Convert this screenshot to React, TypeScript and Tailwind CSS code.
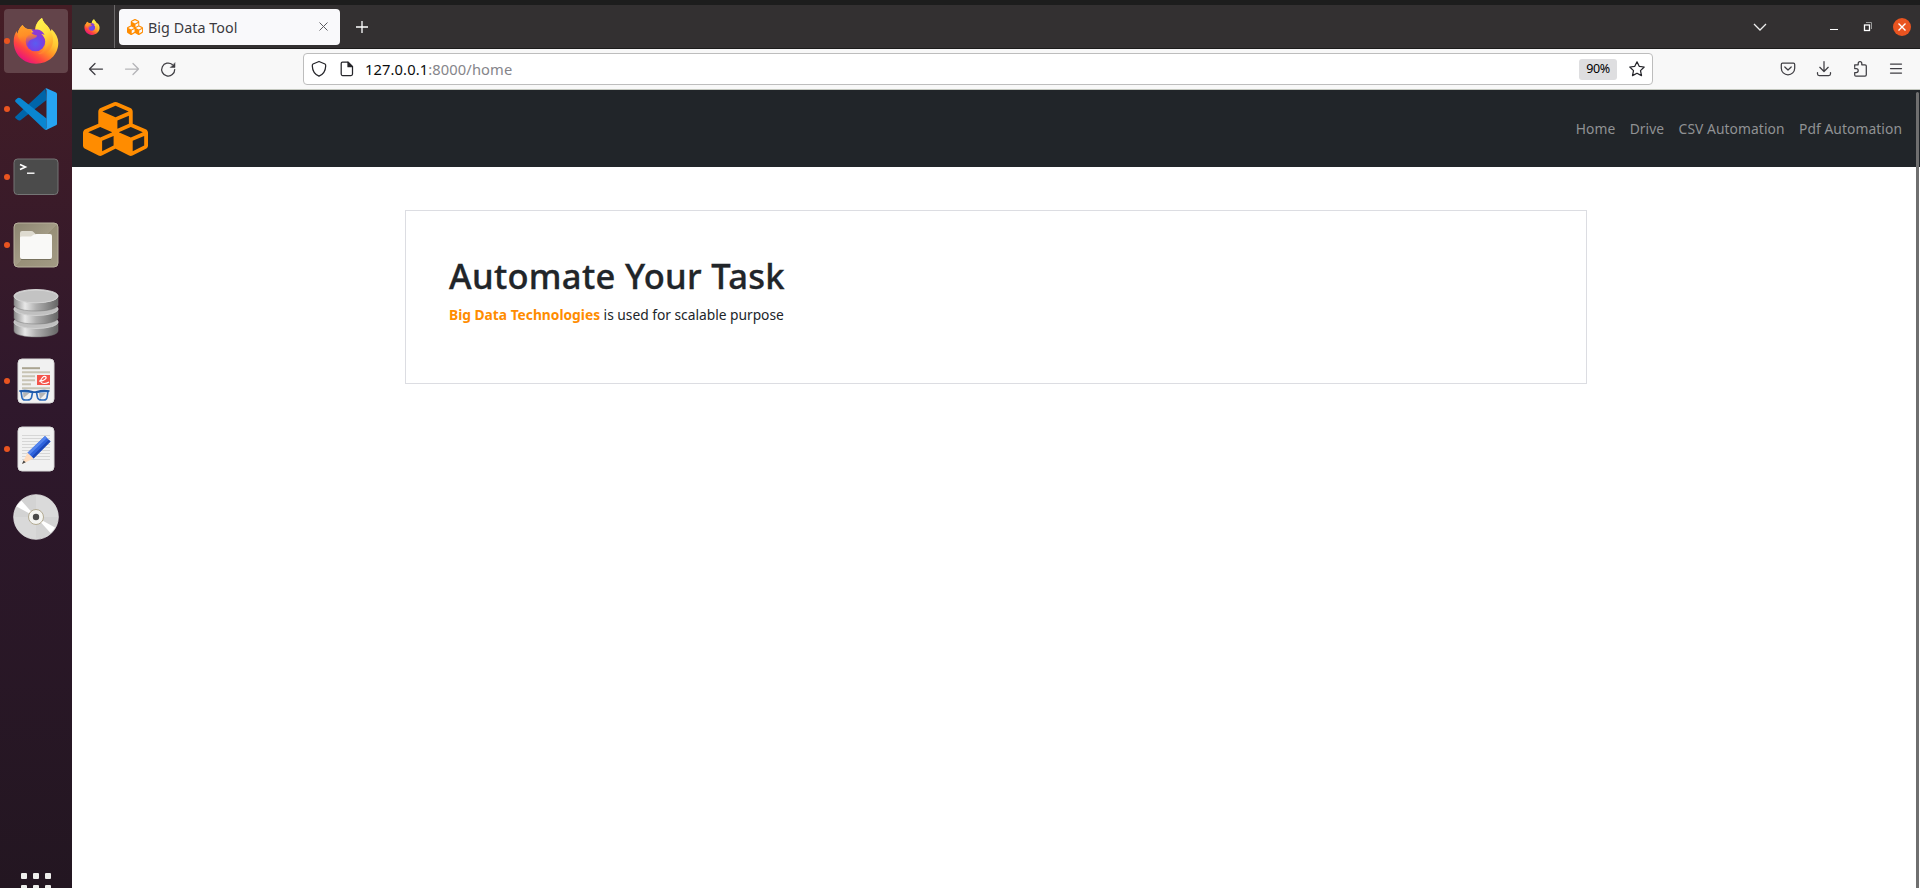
import type { ReactNode } from "react";

const CUBES =
  "M640 1632l384-192v-314l-384 164v342zm-64-454l404-173-404-173-404 173zm1088 454l384-192v-314l-384 164v342zm-64-454l404-173-404-173-404 173zm-448-293l384-165v-266l-384 164v267zm-64-379l441-189-441-189-441 189zm1088 518v416q0 36-19 67t-52 47l-448 224q-25 14-57 14t-57-14l-448-224q-4-2-7-4-2 2-7 4l-448 224q-25 14-57 14t-57-14l-448-224q-33-16-52-47t-19-67v-416q0-38 21.500-70t56.500-48l434-186v-400q0-38 21.500-70t56.500-48l448-192q23-10 50-10t50 10l448 192q35 16 56.500 48t21.500 70v400l434 186q36 16 57 48t21 70z";

function Cubes({ className }: { className: string }) {
  return (
    <svg viewBox="0 0 2176 1792" preserveAspectRatio="none" className={className} fill="#ff8c00">
      <path d={CUBES} />
    </svg>
  );
}

function Firefox({ id, className }: { id: string; className: string }) {
  return (
    <svg viewBox="0 0 46 47" className={className}>
      <defs>
        <linearGradient id={id + "body"} x1="0.85" y1="0.15" x2="0.3" y2="0.97">
          <stop offset="0" stopColor="#ffec4a" />
          <stop offset="0.35" stopColor="#ffc532" />
          <stop offset="0.56" stopColor="#ff8f26" />
          <stop offset="0.78" stopColor="#ff4540" />
          <stop offset="1" stopColor="#ea1579" />
        </linearGradient>
        <linearGradient id={id + "flame"} x1="0.3" y1="0" x2="0.6" y2="1">
          <stop offset="0" stopColor="#fff44f" />
          <stop offset="0.45" stopColor="#ffe040" />
          <stop offset="0.8" stopColor="#ffae2c" />
          <stop offset="1" stopColor="#ff6a33" stopOpacity="0" />
        </linearGradient>
        <linearGradient id={id + "head"} x1="0.2" y1="0" x2="0.4" y2="1">
          <stop offset="0" stopColor="#ffa22a" />
          <stop offset="0.5" stopColor="#ff8f27" />
          <stop offset="1" stopColor="#ff5438" stopOpacity="0.1" />
        </linearGradient>
        <radialGradient id={id + "globe"} cx="0.5" cy="0.6" r="0.6">
          <stop offset="0" stopColor="#5a5df0" />
          <stop offset="0.6" stopColor="#7542e5" />
          <stop offset="1" stopColor="#9a35c8" />
        </radialGradient>
      </defs>
      <path
        d="M9.500 8C11 10.500 13 11.500 14.500 12Q19 12 22 13.500C22 8 25 3.500 29 1C30 4.500 32 6.500 34.500 9C36 11 37 12.800 37.500 14.500C38.200 13.700 38.500 13 38.500 12C43 16 45.300 21 45.300 26C45.300 38 35.500 46.700 23 46.700C10.500 46.700 .7 37.500 .7 24.500C.7 19.500 2 16 4 14C4 15 4.200 16 4.600 16.700C5.500 12.500 7.500 9.800 9.500 8Z"
        fill={`url(#${id}body)`}
      />
      <circle cx="22.500" cy="24.500" r="9.800" fill={`url(#${id}globe)`} />
      <path
        d="M29 1C30 4.500 32 6.500 34.500 9C39 15 41 21 39.500 27C38 34 32 38 25 37C31 35 33.500 30 32.700 25C32 20 29 16.500 24 14C21.500 11 24 4 29 1Z"
        fill={`url(#${id}flame)`}
      />
      <path
        d="M18.500 13C25 11.500 30 13.500 31.500 18C29 16.500 27.500 17 26 18C23.500 18 20.500 15.500 18.500 13Z"
        fill="#8b3bd6"
      />
      <path
        d="M9.500 8C11 10.500 13 11.800 15 12C16.500 12 18 12.500 18.500 13.500C18 15.500 18.500 17.500 24 18.500C24 21 21 21.500 18.500 22.500C15.500 23.700 14.500 26 15.500 29C11 28 5 23 4.600 16.700C5.500 12.500 7.500 9.800 9.500 8Z"
        fill={`url(#${id}head)`}
      />
    </svg>
  );
}

function VsCode() {
  return (
    <svg viewBox="0 0 42 42" className="size-[42px]">
      <path d="M0 29L30.500 .4L31.500 12L5.500 32.300Q3.800 33 2.500 31.800L.6 30.200Q0 29.500 0 29Z" fill="#0065a9" />
      <path d="M.6 11.800L2.800 10Q4 9.200 5.500 10.200L31.500 30.500L31.500 42Q30 42 28.500 40.500L.6 14Q-.3 13 .6 11.800Z" fill="#0a86d1" />
      <path d="M30.500 .4Q31 0 32 .4L41 4.600Q42 5.200 42 6.300V35.700Q42 36.800 41 37.300L32.200 41.600Q31.300 42 30.500 41.600L31.500 40V2Z" fill="#26a4f2" />
    </svg>
  );
}

function Terminal() {
  return (
    <svg viewBox="0 0 46 38" className="h-[38px] w-[46px]">
      <rect x="1" y="1" width="44" height="35.500" rx="3.500" fill="#4b4b4b" stroke="#757575" strokeWidth="1" />
      <path d="M7 6.500L12.500 9L7 11.500" fill="none" stroke="#fff" strokeWidth="1.600" />
      <path d="M14 15.200H21.500" stroke="#fff" strokeWidth="1.400" />
    </svg>
  );
}

function Files() {
  return (
    <svg viewBox="0 0 46 46" className="size-[46px]">
      <defs>
        <linearGradient id="filesTile" x1="0" y1="0" x2="1" y2="1">
          <stop offset="0" stopColor="#8b846f" />
          <stop offset="0.5" stopColor="#a39b85" />
          <stop offset="0.51" stopColor="#989078" />
          <stop offset="1" stopColor="#a29a84" />
        </linearGradient>
      </defs>
      <rect x="1" y="1" width="44" height="44" rx="4" fill="url(#filesTile)" stroke="#b9b29e" />
      <path d="M7 11Q7 9 9 9H18Q20 9 20.500 10L22.500 12V17H7Z" fill="#dedbd0" />
      <path d="M7 15.500Q7 14.500 9 14.500H18L21 12.500Q22 12 23.500 12H37Q39 12 39 14V35Q39 37 37 37H9Q7 37 7 35Z" fill="#f9f9f7" />
      <path d="M8 37.500H38" stroke="#6f6957" strokeWidth="0.8" />
    </svg>
  );
}

function Database() {
  return (
    <svg viewBox="0 0 46 49" className="h-[49px] w-[46px]">
      <defs>
        <linearGradient id="dbSide">
          <stop offset="0" stopColor="#8a8a8a" />
          <stop offset="0.25" stopColor="#e8e8e8" />
          <stop offset="0.5" stopColor="#b0b0b0" />
          <stop offset="1" stopColor="#666" />
        </linearGradient>
      </defs>
      {[33, 20, 7].map((y) => (
        <g key={y}>
          <path
            d={`M1 ${y}V${y + 9}C2 ${y + 17} 44 ${y + 17} 45 ${y + 9}V${y}Z`}
            fill="url(#dbSide)"
            stroke="#777"
            strokeWidth="0.5"
          />
          <ellipse cx="23" cy={y} rx="22" ry="6.500" fill="#c0c0c0" stroke="#d2d2d2" />
        </g>
      ))}
      <ellipse cx="23" cy="7.500" rx="21.500" ry="6.300" fill="#c3c3c3" stroke="#d4d4d4" />
    </svg>
  );
}

function Sheet({ children }: { children: ReactNode }) {
  return (
    <svg viewBox="0 0 38 46" className="h-[46px] w-[38px]">
      <rect x="1" y="1" width="36" height="44" rx="4" fill="#f1f1f1" stroke="#d9d9d9" />
      {children}
    </svg>
  );
}

function DocumentViewer() {
  return (
    <Sheet>
      <path d="M5 10.200H23" stroke="#aaa491" strokeWidth="2" />
      <path d="M5 14.200H33M5 18.200H18M5 22.200H18M5 26.200H14M5 30.200H33" stroke="#c8c3b4" strokeWidth="2" />
      <rect x="20" y="17" width="13" height="10" fill="#f4544a" />
      <path d="M22 23C25 23.500 30 21 29 19C27 17 23 21 24 24C25 26 29 26 32 24" fill="none" stroke="#fff" strokeWidth="1.100" />
      <path d="M6 34.500H13L6.500 40ZM22 35H29L23 41Z" fill="#b5b5b5" />
      <path
        d="M4 33.500Q9.500 33 15.500 34.500L14.500 39.500Q13.800 42 10.500 42H8Q5.500 42 5 39.500ZM19.500 34.500Q25.500 33 31 33.500L30 39.500Q29.500 42 27 42H24.500Q21.200 42 20.500 39.500Z"
        fill="none"
        stroke="#2a69ba"
        strokeWidth="1.600"
      />
      <path d="M2.300 33.200Q9 32 15.500 33.800Q17.500 34.500 19.500 33.800Q26 32 32.500 33.200" fill="none" stroke="#1c57a8" strokeWidth="1.800" />
    </Sheet>
  );
}

function TextEditor() {
  return (
    <Sheet>
      <path
        d="M5 9.500H33M5 12.500H33M5 15.500H33M5 18.500H33M5 21.500H33M5 24.500H33M5 27.500H33M5 30.500H33M5 33.500H33"
        stroke="#d6d6d6"
        strokeWidth="1"
      />
      <path d="M28 10L33.500 15.500L16.500 32.500L10.500 26.800Z" fill="#2f63dd" />
      <path d="M28 10L30 12L12.500 28.700L10.500 26.800Z" fill="#5686ee" />
      <path d="M31.800 13.800L33.500 15.500L16.500 32.500L14.800 30.800Z" fill="#1d48b8" />
      <path d="M10.500 26.800L16.500 32.500L5 38Z" fill="#ffdcbd" />
      <path d="M6.500 34.500L8.800 36.300L5 38Z" fill="#444" />
    </Sheet>
  );
}

function Disc() {
  return (
    <svg viewBox="0 0 46 46" className="size-[46px]">
      <circle cx="23" cy="23" r="22.300" fill="#d3d3d3" stroke="#e6e6e6" strokeWidth="0.8" />
      <path d="M23 23V1A22 22 0 0 1 45 23Z" fill="#dadada" />
      <path d="M23 23V45A22 22 0 0 1 1 23Z" fill="#d9d9d9" />
      <path d="M23 23L3.500 12.500Q5.500 9 8.500 6.800Z" fill="#fff" />
      <path d="M23 23L42 33.500Q40.500 36.500 37.500 39Z" fill="#fff" />
      <circle cx="23" cy="23" r="7.500" fill="#f4f4f1" stroke="#b3ab93" strokeWidth="1" />
      <circle cx="23" cy="23" r="3.200" fill="#4a4a4a" />
    </svg>
  );
}

const dock: { name: string; icon: ReactNode; running: boolean; active?: boolean }[] = [
  { name: "firefox", icon: <Firefox id="dock" className="mb-0.5 h-[47px] w-[46px]" />, running: true, active: true },
  { name: "code", icon: <VsCode />, running: true },
  { name: "terminal", icon: <Terminal />, running: true },
  { name: "files", icon: <Files />, running: true },
  { name: "database", icon: <Database />, running: false },
  { name: "viewer", icon: <DocumentViewer />, running: true },
  { name: "editor", icon: <TextEditor />, running: true },
  { name: "disc", icon: <Disc />, running: false },
];

function Dock() {
  return (
    <aside className="flex w-[72px] shrink-0 flex-col bg-linear-to-b from-[#451d25] via-[#2f182c] via-45% to-[#231621] px-1 pt-1">
      <div className="flex flex-col gap-1">
        {dock.map((d) => (
          <div
            key={d.name}
            className={`relative flex size-16 items-center justify-center rounded-[4px] ${d.active ? "bg-[#63444a]" : ""}`}
          >
            {d.running && <span className="absolute top-[29px] left-0 size-1.5 rounded-full bg-[#e95420]" />}
            {d.icon}
          </div>
        ))}
      </div>
      <div className="mt-auto grid h-[15px] grid-cols-[6px_6px_6px] justify-center gap-1.5 overflow-hidden">
        {[0, 1, 2, 3, 4, 5].map((i) => (
          <span key={i} className="size-1.5 rounded-[1px] bg-[#eeeeec]" />
        ))}
      </div>
    </aside>
  );
}

function TabBar() {
  return (
    <div className="flex h-11 items-center border-b border-[#1c1b1b] bg-[#333031]">
      <div className="flex h-full w-[43px] items-center justify-center border-r border-[#6b696a] pr-0.5">
        <Firefox id="tab" className="h-4 w-4" />
      </div>
      <div className="ml-1 flex h-9 w-[221px] items-center rounded-[4px] bg-[#f9f9fb] pl-2">
        <Cubes className="h-4 w-4" />
        <span className="mt-0.5 ml-[5px] text-[14.300px] tracking-[0.05px] whitespace-nowrap text-[#3b3a3f]">
          Big Data Tool
        </span>
        <svg viewBox="0 0 9 9" className="mr-[12px] ml-auto size-[9px]" stroke="#5c5c60" strokeWidth="1">
          <path d="M.5 .5L8.500 8.500M8.500 .5L.5 8.500" />
        </svg>
      </div>
      <svg viewBox="0 0 12 12" className="mt-px ml-[15.500px] size-3" stroke="#fff" strokeWidth="1.300">
        <path d="M6 0V12M0 6H12" />
      </svg>
      <svg viewBox="0 0 14 8" className="mr-[63px] ml-auto h-2 w-3.5" fill="none" stroke="#eee" strokeWidth="1.300">
        <path d="M1 1L7 7L13 1" />
      </svg>
      <svg viewBox="0 0 8 10" className="mr-[26px] h-2.5 w-2">
        <path d="M0 7.500H8" stroke="#fff" strokeWidth="1" />
      </svg>
      <svg viewBox="0 0 8 8" className="mr-[21px] size-2 overflow-visible" fill="none">
        <path d="M2 -.5H7.500V6" stroke="#999" />
        <rect x=".5" y="2" width="5" height="5.500" stroke="#fff" strokeWidth="1.300" />
      </svg>
      <svg viewBox="0 0 18 18" className="mr-[9px] size-[18px]">
        <circle cx="9" cy="9" r="9" fill="#e95420" />
        <path d="M5.500 5.500L12.500 12.500M12.500 5.500L5.500 12.500" stroke="#fff" strokeWidth="1.400" />
      </svg>
    </div>
  );
}

function ToolIcon({ className, children }: { className: string; children: ReactNode }) {
  return (
    <svg
      viewBox="0 0 16 16"
      className={`size-4 shrink-0 overflow-visible ${className}`}
      fill="none"
      strokeWidth="1.250"
      strokeLinejoin="round"
      strokeLinecap="round"
    >
      {children}
    </svg>
  );
}

function Toolbar() {
  return (
    <div className="flex h-[41px] items-center border-b border-[#c3c7be] bg-[#f8f8f8]">
      <ToolIcon className="ml-4 stroke-[#3f3e43]">
        <path d="M14.500 8H1.500M7 2.500L1.500 8L7 13.500" />
      </ToolIcon>
      <ToolIcon className="ml-5 stroke-[#b5b5b8]">
        <path d="M1.500 8H14.500M9 2.500L14.500 8L9 13.500" />
      </ToolIcon>
      <ToolIcon className="ml-5 stroke-[#3f3e43]">
        <path d="M14.700 8.500A6.500 6.500 0 1 1 12.300 3.500" />
        <path d="M15 2V6.500H10.500Z" fill="#3f3e43" strokeWidth="0.5" />
      </ToolIcon>
      <div className="ml-[127px] flex h-8 w-[1350px] items-center rounded-[4px] border border-[#bdbdbd] bg-white">
        <ToolIcon className="ml-[7px] stroke-[#25252a]">
          <path d="M8 .5L14 3Q14.800 3.500 14.700 5C14.500 10 12 13.500 8 15.200C4 13.500 1.500 10 1.300 5Q1.200 3.500 2 3Z" />
        </ToolIcon>
        <ToolIcon className="ml-3 stroke-[#25252a]">
          <path d="M3.500 1.200H9L13.500 5.700V13Q13.500 14.500 12 14.500H3.500Q2.200 14.500 2.200 13V2.500Q2.200 1.200 3.500 1.200Z" />
          <path d="M9 1.200V5.700H13.500Z" fill="#25252a" />
        </ToolIcon>
        <span className="ml-[10px] text-[14.700px] tracking-[0.11px] whitespace-nowrap text-[#85858a]">
          <span className="text-[#0c0c0d]">127.0.0.1</span>:8000/home
        </span>
        <span className="mr-[12px] ml-auto flex h-[21px] w-[38px] items-center justify-center rounded-[3px] bg-[#dedee0] pt-px text-[12.500px] tracking-[-0.4px] text-black">
          90%
        </span>
        <ToolIcon className="mr-[7px] stroke-[#25252a]">
          <path d="M8 .8L10.200 5.300L15.200 6L11.500 9.600L12.500 14.600L8 12.200L3.500 14.600L4.500 9.600L.8 6L5.800 5.300Z" />
        </ToolIcon>
      </div>
      <ToolIcon className="ml-auto stroke-[#3f3e43]">
        <path d="M2.500 2.200H13.500Q14.700 2.200 14.700 3.500V7.300A6.700 6.500 0 0 1 1.300 7.300V3.500Q1.300 2.200 2.500 2.200Z" />
        <path d="M4.800 6L8 9L11.200 6" />
      </ToolIcon>
      <ToolIcon className="ml-5 stroke-[#3f3e43]">
        <path d="M8 .5V10.200M3.800 6.300L8 10.500L12.200 6.300M1.500 11.500V12.700Q1.500 14.500 3.300 14.500H12.700Q14.500 14.500 14.500 12.700V11.500" />
      </ToolIcon>
      <ToolIcon className="ml-5 stroke-[#3f3e43]">
        <path d="M2.700 5.500V3.800H6.200V2.500Q6.200 .5 8 .5Q9.800 .5 9.800 2.500V3.800H13Q14.300 3.800 14.300 5V13.800Q14.300 15.200 13 15.200H3.900Q2.700 15.200 2.700 14V11.500H4.200Q6.200 11.500 6.200 9.500Q6.200 7.500 4.200 7.500H2.700V6.500" />
      </ToolIcon>
      <ToolIcon className="mr-4 ml-5 stroke-[#3f3e43]">
        <path d="M2.500 3H13.500M2.500 7.500H13.500M2.500 12H13.500" />
      </ToolIcon>
    </div>
  );
}

function Page() {
  return (
    <div className="relative flex-1 bg-white">
      <nav className="flex h-[77px] items-center bg-[#212529] pr-[18px] pl-[11px]">
        <Cubes className="h-[54px] w-[65px]" />
        <ul className="mt-0.5 ml-auto flex items-center gap-[14.400px] text-[13.800px] tracking-[0.08px] whitespace-nowrap text-[#909294]">
          <li>Home</li>
          <li>Drive</li>
          <li>CSV Automation</li>
          <li>Pdf Automation</li>
        </ul>
      </nav>
      <main className="mt-[43px] ml-[333px] h-[174px] w-[1182px] border border-[#dcdde2] px-[43px] pt-[42px]">
        <h1 className="text-[34.500px] leading-[46px] font-medium tracking-[0.33px] whitespace-nowrap text-[#212529] [-webkit-text-stroke:0.35px_#212529]">
          Automate Your Task
        </h1>
        <p className="mt-[5px] text-[13.800px] leading-[22px] tracking-[-0.02px] whitespace-nowrap text-[#212529]">
          <b className="font-bold text-[#ff8c00]">Big Data Technologies</b> is used for scalable purpose
        </p>
      </main>
      <div className="absolute top-0.5 right-px bottom-0 w-[3px] rounded-t-sm bg-[#6f6f6f]" />
    </div>
  );
}

export default function App() {
  return (
    <div className="flex h-[888px] w-[1920px] flex-col overflow-hidden bg-[#1d1d1d] pt-[5px] font-['Noto_Sans','Open_Sans',sans-serif]">
      <div className="flex min-h-0 flex-1">
        <Dock />
        <div className="flex min-w-0 flex-1 flex-col">
          <TabBar />
          <Toolbar />
          <Page />
        </div>
      </div>
    </div>
  );
}
